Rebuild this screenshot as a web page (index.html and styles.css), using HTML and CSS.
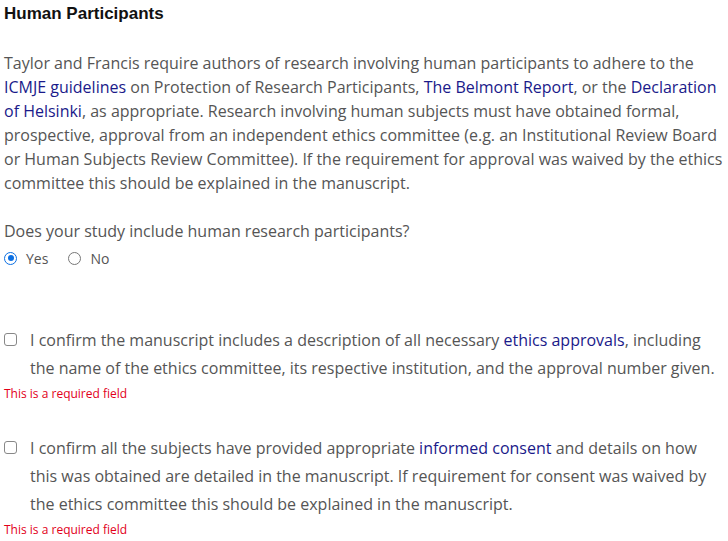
FILE: index.html
```html
<!DOCTYPE html>
<html>
<head>
<meta charset="utf-8">
<link rel="stylesheet" href="styles.css">
</head>
<body>
<div class="section">
  <h3 class="title">Human Participants</h3>
  <p class="intro">Taylor and Francis require authors of research involving human participants to adhere to the <a href="#">ICMJE guidelines</a> on Protection of Research Participants, <a href="#">The Belmont Report</a>, or the <a href="#">Declaration of Helsinki</a>, as appropriate. Research involving human subjects must have obtained formal, prospective, approval from an independent ethics committee (e.g. an Institutional Review Board or Human Subjects Review Committee). If the requirement for approval was waived by the ethics committee this should be explained in the manuscript.</p>
  <p class="question">Does your study include human research participants?</p>
  <div class="radios">
    <label class="radio"><span class="dot checked"></span>Yes</label>
    <label class="radio"><span class="dot"></span>No</label>
  </div>
  <div class="check">
    <span class="box"></span>
    <span class="label">I confirm the manuscript includes a description of all necessary <a href="#">ethics approvals</a>, including the name of the ethics committee, its respective institution, and the approval number given.</span>
  </div>
  <div class="error">This is a required field</div>
  <div class="check second">
    <span class="box"></span>
    <span class="label">I confirm all the subjects have provided appropriate <a href="#">informed consent</a> and details on how this was obtained are detailed in the manuscript. If requirement for consent was waived by the ethics committee this should be explained in the manuscript.</span>
  </div>
  <div class="error">This is a required field</div>
</div>
</body>
</html>
```
FILE: styles.css
```css
html, body {
  margin: 0;
  padding: 0;
  background: #fff;
}
.section {
  padding: 4px 2px 0 4px;
  font-family: "Open Sans", sans-serif;
  font-size: 16px;
  color: #555;
}
.title {
  margin: 0;
  font-family: "Liberation Sans", Arial, sans-serif;
  font-weight: bold;
  font-size: 17px;
  line-height: 20px;
  color: #111;
}
.intro {
  margin: 27px 0 0;
  line-height: 24px;
}
a {
  color: #1a1a8a;
  text-decoration: none;
}
.question {
  margin: 24px 0 0;
  line-height: 24px;
}
.radios {
  display: flex;
  gap: 20px;
  margin-top: 3px;
  height: 24px;
  align-items: center;
  font-size: 14px;
}
.radio {
  display: flex;
  align-items: center;
  gap: 9px;
}
.dot {
  width: 11px;
  height: 11px;
  border: 1.5px solid #777;
  border-radius: 50%;
  box-sizing: content-box;
  position: relative;
}
.dot.checked {
  border-color: #0b6fe3;
}
.dot.checked::after {
  content: "";
  position: absolute;
  left: 2.5px;
  top: 2.5px;
  width: 6px;
  height: 6px;
  border-radius: 50%;
  background: #0b6fe3;
}
.check {
  display: flex;
  gap: 13px;
  margin-top: 56px;
  line-height: 28px;
}
.check.second {
  margin-top: 32px;
}
.box {
  flex: none;
  width: 11px;
  height: 11px;
  border: 1.5px solid #888;
  border-radius: 3px;
  margin-top: 7px;
}
.error {
  font-size: 12px;
  line-height: 16px;
  color: #e2001a;
  margin-top: 4px;
}
```
